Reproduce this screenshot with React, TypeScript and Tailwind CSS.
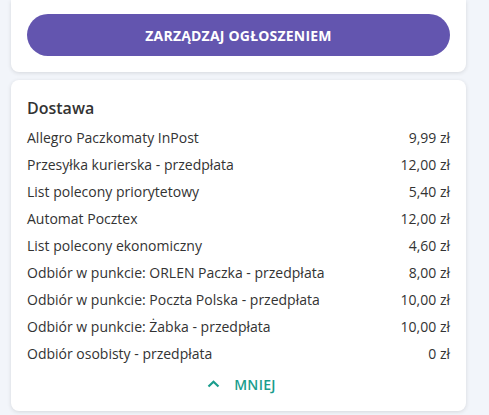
const rows: [string, string][] = [
  ["Allegro Paczkomaty InPost", "9,99 zł"],
  ["Przesyłka kurierska - przedpłata", "12,00 zł"],
  ["List polecony priorytetowy", "5,40 zł"],
  ["Automat Pocztex", "12,00 zł"],
  ["List polecony ekonomiczny", "4,60 zł"],
  ["Odbiór w punkcie: ORLEN Paczka - przedpłata", "8,00 zł"],
  ["Odbiór w punkcie: Poczta Polska - przedpłata", "10,00 zł"],
  ["Odbiór w punkcie: Żabka - przedpłata", "10,00 zł"],
  ["Odbiór osobisty - przedpłata", "0 zł"],
];

export default function App() {
  return (
    <div className="min-h-screen bg-[#f2f5fa] pl-[11px] text-[#333] font-['Open_Sans',sans-serif]">
      <div className="w-[455px] rounded-b-lg bg-white px-4 pt-[14px] pb-4 shadow-[0_1px_4px_rgba(0,0,0,0.12)]">
        <button className="flex h-[42px] w-full items-center justify-center rounded-full bg-[#6355af] text-[14px] font-bold tracking-[0.2px] text-white">
          ZARZĄDZAJ OGŁOSZENIEM
        </button>
      </div>

      <div className="mt-2 w-[455px] rounded-lg bg-white px-4 pt-4 pb-[15px] shadow-[0_1px_4px_rgba(0,0,0,0.12)]">
        <h2 className="mb-1 text-[16px] leading-6 font-semibold">Dostawa</h2>
        <ul>
          {rows.map(([name, price]) => (
            <li key={name} className="flex h-[27px] items-center justify-between text-[14px]">
              <span>{name}</span>
              <span>{price}</span>
            </li>
          ))}
        </ul>
        <button className="mx-auto mt-[5px] flex h-6 items-center gap-[14px] pl-[6px] text-[14px] font-semibold tracking-[0.3px] text-[#1a9d8d]">
          <svg width="13" height="8" viewBox="0 0 13 8" fill="none">
            <path d="M1.5 6.5 6.5 1.8l5 4.7" stroke="currentColor" strokeWidth="2.2" />
          </svg>
          MNIEJ
        </button>
      </div>
    </div>
  );
}
